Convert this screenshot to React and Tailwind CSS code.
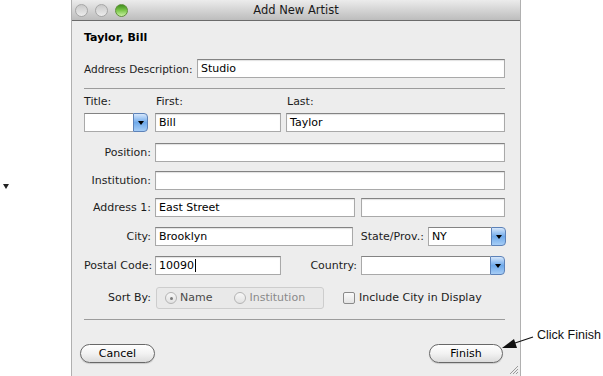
import React from 'react';

const Field = ({ w, value, focused, className = '' }) => (
    <div
        className={`h-[19px] ${w} ${className} bg-white border border-[#a9a9a9] border-t-[#838383] shadow-[inset_0_1px_1px_rgba(0,0,0,0.12)] flex items-center px-[3px] text-black ${
            focused ? 'shadow-[0_0_0_2px_rgba(104,158,224,0.75),0_0_3px_3px_rgba(140,185,240,0.5)] border-[#6f97c9]' : ''
        }`}
    >
        <span>{value}</span>
        {focused && <span className="w-px h-[13px] bg-black ml-px" />}
    </div>
);

const Popup = ({ w, value }) => (
    <div className={`h-[19px] ${w} flex`}>
        <div className="flex-1 bg-white border border-[#a9a9a9] border-t-[#838383] border-r-0 flex items-center px-[3px] text-black">
            {value}
        </div>
        <div className="w-[15px] h-full rounded-r-[4px] border border-[#5d82b8] bg-gradient-to-b from-[#d6e7fb] via-[#6ea9ea] to-[#a6cdf6] flex items-center justify-center">
            <div className="w-0 h-0 border-l-[3px] border-r-[3px] border-t-[4px] border-l-transparent border-r-transparent border-t-black" />
        </div>
    </div>
);

const Label = ({ children }) => (
    <div className="w-[67px] text-right shrink-0 text-[#1c1c1c] whitespace-nowrap">{children}</div>
);

const Radio = ({ checked, label, dim }) => (
    <div className="flex items-center gap-[3px]">
        <div className="w-[12px] h-[12px] rounded-full border border-[#b4b4b4] bg-gradient-to-b from-[#f7f7f7] to-[#e2e2e2] flex items-center justify-center">
            {checked && <div className="w-[3px] h-[3px] rounded-full bg-[#7a7a7a]" />}
        </div>
        <span className={dim ? 'text-[#8a8a8a]' : 'text-[#4a4a4a]'}>{label}</span>
    </div>
);

const PillButton = ({ w, children }) => (
    <div
        className={`${w} h-[19px] rounded-full border border-[#686868] bg-gradient-to-b from-white via-[#f2f2f2] to-[#dcdcdc] shadow-[0_1px_1px_rgba(0,0,0,0.15)] flex items-center justify-center text-black`}
    >
        {children}
    </div>
);

export default function App() {
    return (
        <div className="relative w-[603px] h-[376px] bg-white flex overflow-hidden font-['DejaVu_Sans',sans-serif] text-[11px] leading-[14px]">
            {/* left gutter */}
            <div className="w-[71px] shrink-0 pt-[184px] pl-[3px]">
                <div className="w-0 h-0 border-l-[3px] border-r-[3px] border-t-[5px] border-l-transparent border-r-transparent border-t-[#222]" />
            </div>

            {/* Window */}
            <div className="relative w-[450px] shrink-0 h-full flex flex-col bg-[#ededed] border-x border-[#b0b0b0]">
                {/* Title bar */}
                <div className="h-[21px] shrink-0 bg-gradient-to-b from-[#ececec] to-[#bdbdbd] border-b border-[#6b6b6b] flex items-center relative">
                    <div className="flex items-center gap-[7px] pl-[3px]">
                        <div className="w-[13px] h-[13px] rounded-full border border-[#a6a6a6] bg-gradient-to-b from-[#c9c9c9] to-[#ececec]" />
                        <div className="w-[13px] h-[13px] rounded-full border border-[#a6a6a6] bg-gradient-to-b from-[#c9c9c9] to-[#ececec]" />
                        <div className="w-[13px] h-[13px] rounded-full border border-[#5f8f3a] bg-gradient-to-b from-[#3f8f1c] via-[#7cc84a] to-[#c8f0a0]" />
                    </div>
                    <div className="absolute inset-0 flex items-center justify-center text-[11.5px] text-[#1a1a1a]">
                        Add New Artist
                    </div>
                </div>

                {/* Content */}
                <div className="pl-[12px] pr-[14px] flex flex-col">
                    <div className="mt-[9px] h-[16px] flex items-center font-bold text-[11px] text-black">Taylor, Bill</div>

                    <div className="mt-[13px] flex items-center">
                        <div className="w-[113px] text-[10.5px] text-[#1c1c1c] whitespace-nowrap">Address Description:</div>
                        <Field w="w-[308px]" value="Studio" />
                    </div>

                    <div className="mt-[10px] h-px w-[421px] bg-[#9c9c9c]" />

                    <div className="mt-[6px] flex h-[14px] text-[#1c1c1c]">
                        <div className="w-[72px]">Title:</div>
                        <div className="w-[131px]">First:</div>
                        <div>Last:</div>
                    </div>

                    <div className="mt-[4px] flex items-center">
                        <Popup w="w-[64px]" />
                        <div className="w-[7px]" />
                        <Field w="w-[126px]" value="Bill" />
                        <div className="w-[5px]" />
                        <Field w="w-[219px]" value="Taylor" />
                    </div>

                    <div className="mt-[11px] flex items-center gap-[4px]">
                        <Label>Position:</Label>
                        <Field w="w-[350px]" />
                    </div>

                    <div className="mt-[9px] flex items-center gap-[4px]">
                        <Label>Institution:</Label>
                        <Field w="w-[350px]" />
                    </div>

                    <div className="mt-[8px] flex items-center gap-[4px]">
                        <Label>Address 1:</Label>
                        <Field w="w-[200px]" value="East Street" />
                        <Field w="w-[144px]" className="ml-[2px]" />
                    </div>

                    <div className="mt-[10px] flex items-center gap-[4px]">
                        <Label>City:</Label>
                        <Field w="w-[200px]" value="Brooklyn" />
                        <div className="w-[67px] text-right text-[#1c1c1c] shrink-0 whitespace-nowrap">State/Prov.:</div>
                        <Popup w="w-[79px]" value="NY" />
                    </div>

                    <div className="mt-[10px] flex items-center gap-[4px]">
                        <Label>Postal Code:</Label>
                        <Field w="w-[126px]" value="10090" focused />
                        <div className="w-[72px] text-right text-[#1c1c1c] shrink-0">Country:</div>
                        <Popup w="w-[144px]" />
                    </div>

                    <div className="mt-[12px] flex items-center gap-[5px]">
                        <Label>Sort By:</Label>
                        <div className="w-[168px] h-[22px] rounded-[3px] border border-[#cdcdcd] bg-[#e9e9e9] flex items-center pl-[8px] gap-[22px]">
                            <Radio checked label="Name" />
                            <Radio label="Institution" dim />
                        </div>
                        <div className="ml-[14px] flex items-center gap-[4px]">
                            <div className="w-[12px] h-[12px] rounded-[2px] border border-[#8a8a8a] bg-gradient-to-b from-[#fafafa] to-[#e4e4e4]" />
                            <span className="text-[#1c1c1c] whitespace-nowrap">Include City in Display</span>
                        </div>
                    </div>

                    <div className="mt-[10px] h-px w-[421px] bg-[#9c9c9c]" />

                    <div className="mt-[24px] flex items-center w-[423px] -ml-[4px]">
                        <PillButton w="w-[75px]">Cancel</PillButton>
                        <div className="flex-1" />
                        <PillButton w="w-[74px]">Finish</PillButton>
                    </div>
                </div>

                {/* resize grip */}
                <svg className="absolute right-[1px] bottom-[1px]" width="12" height="12" viewBox="0 0 12 12">
                    <path d="M11 3 L3 11 M11 6 L6 11 M11 9 L9 11" stroke="#9a9a9a" strokeWidth="1" />
                </svg>
            </div>

            {/* annotation */}
            <div className="flex-1 pl-[16px] pt-[328px] font-['Liberation_Sans',sans-serif] text-[12.5px] text-[#111] whitespace-nowrap">
                Click Finish
            </div>
            <svg className="absolute left-0 top-0 pointer-events-none" width="603" height="376">
                <line x1="533" y1="337" x2="512" y2="344" stroke="#111" strokeWidth="1.2" />
                <polygon points="502,348 514,339 517,348" fill="#111" />
            </svg>
        </div>
    );
}
